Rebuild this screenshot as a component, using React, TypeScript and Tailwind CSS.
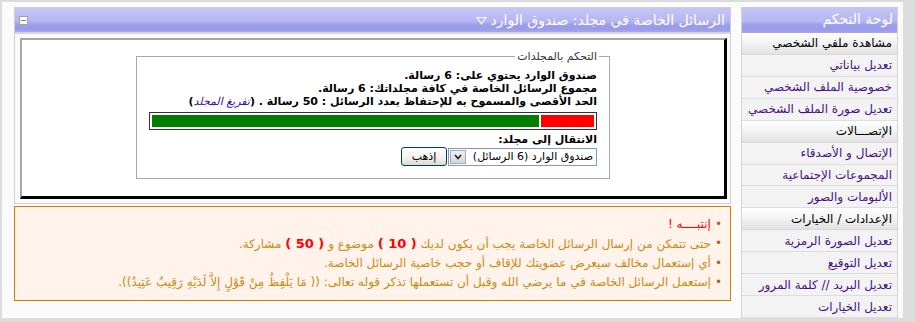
import React from "react";

const hdr =
  "bg-[linear-gradient(to_bottom,#c6c6f6_0%,#b6b6f2_55%,#9d9deb_70%,#9a9aea_88%,#a8a8ee_100%)]";

function SideSection({ label }: { label: string }) {
  return (
    <div className="h-[22px] flex items-center pr-[5px] border-b border-[#d8d8d8] bg-[linear-gradient(to_bottom,#ffffff_0%,#f4f4f4_45%,#e2e2e2_100%)] text-[12px] text-black">
      {label}
    </div>
  );
}

function SideLink({ label }: { label: string }) {
  return (
    <div className="h-[22px] flex items-center pr-[5px] border-b border-[#dedede] bg-[#f3f3f3] text-[12px] text-[#46108a]">
      {label}
    </div>
  );
}

export default function App() {
  return (
    <div className="w-[915px] h-[322px] bg-[#dcdcdc] pt-[2px] pl-[2px] pr-[12px] pb-[4px] font-['DejaVu_Sans',sans-serif] overflow-hidden">
      <div dir="rtl" className="h-full bg-[#fbfbfb] flex gap-[10px] pt-[5px] pr-[5px] pl-[12px] overflow-hidden">
        {/* Sidebar */}
        <div className="w-[157px] shrink-0 flex flex-col border-x border-[#d4d4d4]">
          <div className={`h-[26px] flex items-center pr-[4px] text-white text-[14px] ${hdr}`}>
            لوحة التحكم
          </div>
          <SideSection label="مشاهدة ملفي الشخصي" />
          <SideLink label="تعديل بياناتي" />
          <SideLink label="خصوصية الملف الشخصي" />
          <SideLink label="تعديل صورة الملف الشخصي" />
          <SideSection label="الإتصـــالات" />
          <SideLink label="الإتصال و الأصدقاء" />
          <SideLink label="المجموعات الإجتماعية" />
          <SideLink label="الألبومات والصور" />
          <SideSection label="الإعدادات / الخيارات" />
          <SideLink label="تعديل الصورة الرمزية" />
          <SideLink label="تعديل التوقيع" />
          <SideLink label="تعديل البريد // كلمة المرور" />
          <SideLink label="تعديل الخيارات" />
        </div>

        {/* Main column */}
        <div className="w-[717px] shrink-0 flex flex-col">
          <div className="border border-[#d0d0d0]">
            <div className={`h-[24px] flex items-center justify-between pr-[5px] pl-[4px] ${hdr}`}>
              <div className="flex items-center gap-[4px] text-white text-[14px]">
                <span>الرسائل الخاصة في مجلد: صندوق الوارد</span>
                <svg width="11" height="9" viewBox="0 0 11 9">
                  <path d="M1 1.5 H10 L5.5 8 Z" fill="none" stroke="white" strokeWidth="1.2" />
                </svg>
              </div>
              <div className="w-[9px] h-[9px] border border-[#a0a0b0] bg-white flex items-center justify-center">
                <div className="w-[5px] h-px bg-[#808080]" />
              </div>
            </div>
            <div className="border-t-2 border-[#d4d4d4] bg-[#fafafa] pl-[5px] pr-[3px] pt-[4px] pb-[4px]">
              <div className="h-[161px] bg-white border-t-2 border-l-2 border-[#a4a8a4] border-r-[3px] border-b-[3px] border-r-black border-b-black pt-[10px]">
                <fieldset className="w-[474px] mx-auto border border-[#a8a8a8] px-[10px] pb-[12px]">
                  <legend className="px-[2px] text-[11px] leading-[13px] text-[#333]">التحكم بالمجلدات</legend>
                  <div className="px-[2px] pt-[6px] text-[11px] leading-[13px] text-black font-bold">
                    <div>صندوق الوارد يحتوي على: 6 رسالة.</div>
                    <div>مجموع الرسائل الخاصة في كافة مجلداتك: 6 رسالة.</div>
                    <div>
                      الحد الأقصى والمسموح به للإحتفاظ بعدد الرسائل : 50 رسالة . (
                      <span className="italic font-normal text-[#3c1096]">تفريغ المجلد</span>)
                    </div>
                    <div className="mt-[4px] h-[18px] border border-[#333] bg-white p-[2px] flex gap-[2px]">
                      <div className="w-[12%] bg-[#ff0000]" />
                      <div className="flex-1 bg-[#008000]" />
                    </div>
                    <div className="mt-[3px]">الانتقال إلى مجلد:</div>
                    <div className="mt-[1px] flex items-center gap-[1px]">
                      <div className="w-[149px] h-[18px] border border-[#7f9db9] bg-white flex items-center justify-between font-normal">
                        <span className="pr-[3px] text-[11px]">صندوق الوارد (6 الرسائل)</span>
                        <div className="w-[16px] h-[14px] ml-[1px] bg-[linear-gradient(to_bottom,#f0f0f4,#d4d4dc)] border border-[#a8a8b8] flex items-center justify-center">
                          <svg width="8" height="6" viewBox="0 0 8 6">
                            <path d="M1 1 L4 4.5 L7 1" fill="none" stroke="#222" strokeWidth="1.6" />
                          </svg>
                        </div>
                      </div>
                      <div className="w-[46px] h-[19px] rounded-[3px] border border-[#003c74] bg-[linear-gradient(to_bottom,#ffffff,#f2f1ea_60%,#dcd9cc)] flex items-center justify-center text-[11px] font-normal">
                        إذهب
                      </div>
                    </div>
                  </div>
                </fieldset>
              </div>
            </div>
          </div>

          {/* Notice */}
          <div className="mt-[2px] border border-[#c88000] bg-[#fff3ec] px-[8px] py-[8px] text-[12px] leading-[19px] text-[#c98b12]">
            <div className="flex gap-[4px]">
              <span className="text-[#a86a10]">•</span>
              <span className="text-[#ff0000]">إنتبــــه !</span>
            </div>
            <div className="flex gap-[4px]">
              <span className="text-[#a86a10]">•</span>
              <span>
                حتى تتمكن من إرسال الرسائل الخاصة يجب أن يكون لديك{" "}
                <b className="text-[#ff0000] text-[13px]">( 10 )</b> موضوع و{" "}
                <b className="text-[#ff0000] text-[13px]">( 50 )</b> مشاركة.
              </span>
            </div>
            <div className="flex gap-[4px]">
              <span className="text-[#a86a10]">•</span>
              <span>أي إستعمال مخالف سيعرض عضويتك للإقاف أو حجب خاصية الرسائل الخاصة.</span>
            </div>
            <div className="flex gap-[4px]">
              <span className="text-[#a86a10]">•</span>
              <span>
                إستعمل الرسائل الخاصة في ما يرضي الله وقبل أن تستعملها تذكر قوله تعالى: (( مَا يَلْفِظُ مِنْ قَوْلٍ إِلاَّ لَدَيْهِ رَقِيبٌ عَتِيدٌ)).
              </span>
            </div>
          </div>
        </div>
      </div>
    </div>
  );
}
